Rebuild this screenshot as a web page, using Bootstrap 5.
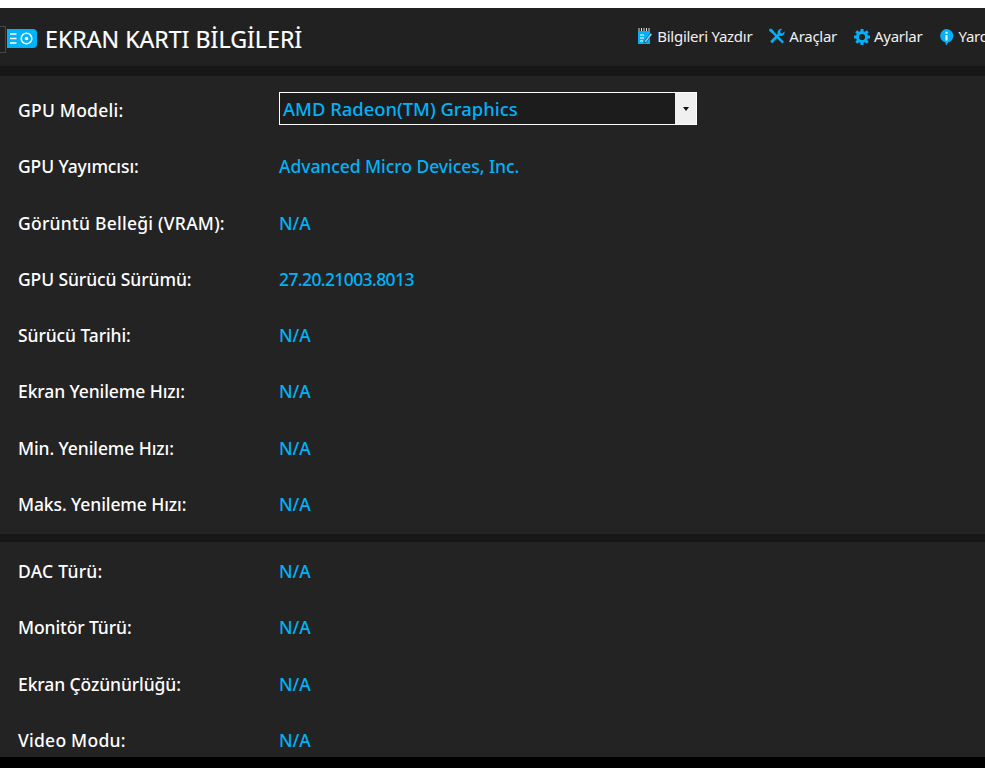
<!DOCTYPE html>
<html lang="tr">
<head>
<meta charset="utf-8">
<title>Ekran Kartı Bilgileri</title>
<link rel="stylesheet" href="https://cdn.jsdelivr.net/npm/bootstrap@5.3.0/dist/css/bootstrap.min.css">
<style>
html,body{height:768px;overflow:hidden;background:#fff}
body{font-family:"Noto Sans","Open Sans",sans-serif;color:#fff;padding-top:8px}
.app-frame{width:985px;height:749px;overflow:hidden;background:#171717}
.app-foot{height:11px;background:#000}
.app-head{height:58px;background:#212121;white-space:nowrap}
.back-tab{width:6px;height:27px;border:1px solid #444;border-left:0;margin-right:1px;flex:none;margin-top:4px}
.app-logo{margin-top:3px;flex:none}
.app-title{font-size:23.2px;font-weight:400;color:#fff;margin:5px 0 0 8px;line-height:1;-webkit-text-stroke:.2px #fff}
.app-menu{margin-left:auto;margin-right:-21px;gap:17px;font-size:15px;color:#f0f0f0;padding-bottom:1px;flex:none}
.app-menu span{letter-spacing:-.27px}
.app-panel{background:#232323}
.panel-one{margin-top:10px;height:458px;padding-top:6.2px}
.panel-two{margin-top:8px;height:215px;padding-top:1px}
.info-row{height:56.25px;padding-left:18px;font-size:17.5px;font-weight:500}
.info-label{width:261px;flex:none;letter-spacing:-.1px}
.label-wide{letter-spacing:.25px}
.info-value{color:#00b2f8;letter-spacing:-.05px}
.info-number{letter-spacing:-.6px}
.gpu-select{width:418px;height:33px;border:1px solid #fff;background:#1c1c1c;color:#00b2f8;font-size:18.4px;padding-left:3px;margin-bottom:3px}
.gpu-arrow{width:21px;background:#f0f0f0;align-self:stretch}
.gpu-arrow i{display:block;border:3px solid transparent;border-top:4px solid #111;border-bottom:0}
</style>
</head>
<body>
<div class="app-frame">
  <header class="app-head d-flex align-items-center">
    <div class="back-tab"></div>
    <svg class="app-logo" width="30" height="19" viewBox="0 0 30 19" aria-hidden="true"><path d="M0 0h26a4 4 0 0 1 4 4v11a4 4 0 0 1-4 4H0z" fill="#00b2f8"/><path d="M3 5h6.500M3 9.500h6.500M3 14h6.500" stroke="#fff" stroke-width="1.500"/><circle cx="19.500" cy="9.500" r="5.300" fill="none" stroke="#fff" stroke-width="1.500"/><circle cx="19.500" cy="9.500" r="1.800" fill="#fff"/></svg>
    <h1 class="app-title">EKRAN KARTI BİLGİLERİ</h1>
    <nav class="app-menu d-flex align-items-center">
      <div class="d-flex align-items-center gap-1">
        <svg width="16" height="17" viewBox="0 0 16 17" aria-hidden="true"><path d="M1 3h12v13H1z" fill="#00b2f8"/><path d="M2 0v3M4.500 0v3M7 0v3M9.500 0v3M12 0v3" stroke="#ddd" stroke-width="1"/><path d="M3 7h4M3 10h4M3 13h3" stroke="#fff" stroke-width="1.200"/><path d="M7.500 13l6-8 1.800 1.300-6 8-2 .5z" fill="#7fd8fb" stroke="#212121" stroke-width=".6"/></svg>
        <span>Bilgileri Yazdır</span>
      </div>
      <div class="d-flex align-items-center gap-1">
        <svg width="16" height="17" viewBox="0 0 17 17" aria-hidden="true"><path d="M2.500 2.500L15 15" stroke="#00b2f8" stroke-width="2.400"/><path d="M0 1l2-1 3.500 3-2 2L.500 3z" fill="#00b2f8"/><path d="M2.300 14.700L10.500 6.500" stroke="#00b2f8" stroke-width="3"/><path d="M16.500 3a4 4 0 0 1-5.500 4.500L9.500 6A4 4 0 0 1 14 .500l-2.200 2.200 .5 2 2 .5z" fill="#00b2f8"/></svg>
        <span>Araçlar</span>
      </div>
      <div class="d-flex align-items-center gap-1">
        <svg width="16" height="16" viewBox="0 0 16 16" aria-hidden="true"><circle cx="8" cy="8" r="4.600" fill="none" stroke="#00b2f8" stroke-width="3"/><g stroke="#00b2f8" stroke-width="3"><path d="M8 0v3M8 13v3M0 8h3M13 8h3M2.300 2.300l2.100 2.100M11.600 11.600l2.100 2.100M13.700 2.300l-2.100 2.100M4.400 11.600l-2.100 2.100"/></g></svg>
        <span>Ayarlar</span>
      </div>
      <div class="d-flex align-items-center gap-1">
        <svg width="15" height="18" viewBox="0 0 15 18" aria-hidden="true"><path d="M7.500 1a6.800 6.800 0 0 1 2 13.300L7 17.500l-.6-3.100A6.800 6.800 0 0 1 7.500 1z" fill="#00b2f8"/><rect x="6.500" y="7" width="2" height="5.500" fill="#fff"/><rect x="6.500" y="3.800" width="2" height="2" fill="#fff"/></svg>
        <span>Yardım</span>
      </div>
    </nav>
  </header>

  <section class="app-panel panel-one">
    <div class="info-row d-flex align-items-center"><div class="info-label label-wide">GPU Modeli:</div>
      <div class="gpu-select d-flex align-items-center justify-content-between"><span>AMD Radeon(TM) Graphics</span><span class="gpu-arrow d-flex align-items-center justify-content-center"><i></i></span></div></div>
    <div class="info-row d-flex align-items-center"><div class="info-label">GPU Yayımcısı:</div><div class="info-value">Advanced Micro Devices, Inc.</div></div>
    <div class="info-row d-flex align-items-center"><div class="info-label label-wide">Görüntü Belleği (VRAM):</div><div class="info-value">N/A</div></div>
    <div class="info-row d-flex align-items-center"><div class="info-label">GPU Sürücü Sürümü:</div><div class="info-value info-number">27.20.21003.8013</div></div>
    <div class="info-row d-flex align-items-center"><div class="info-label">Sürücü Tarihi:</div><div class="info-value">N/A</div></div>
    <div class="info-row d-flex align-items-center"><div class="info-label">Ekran Yenileme Hızı:</div><div class="info-value">N/A</div></div>
    <div class="info-row d-flex align-items-center"><div class="info-label">Min. Yenileme Hızı:</div><div class="info-value">N/A</div></div>
    <div class="info-row d-flex align-items-center"><div class="info-label">Maks. Yenileme Hızı:</div><div class="info-value">N/A</div></div>
  </section>

  <section class="app-panel panel-two">
    <div class="info-row d-flex align-items-center"><div class="info-label label-wide">DAC Türü:</div><div class="info-value">N/A</div></div>
    <div class="info-row d-flex align-items-center"><div class="info-label">Monitör Türü:</div><div class="info-value">N/A</div></div>
    <div class="info-row d-flex align-items-center"><div class="info-label">Ekran Çözünürlüğü:</div><div class="info-value">N/A</div></div>
    <div class="info-row d-flex align-items-center"><div class="info-label label-wide">Video Modu:</div><div class="info-value">N/A</div></div>
  </section>
</div>
<div class="app-foot"></div>
<script src="https://cdn.jsdelivr.net/npm/bootstrap@5.3.0/dist/js/bootstrap.bundle.min.js"></script>
</body>
</html>
